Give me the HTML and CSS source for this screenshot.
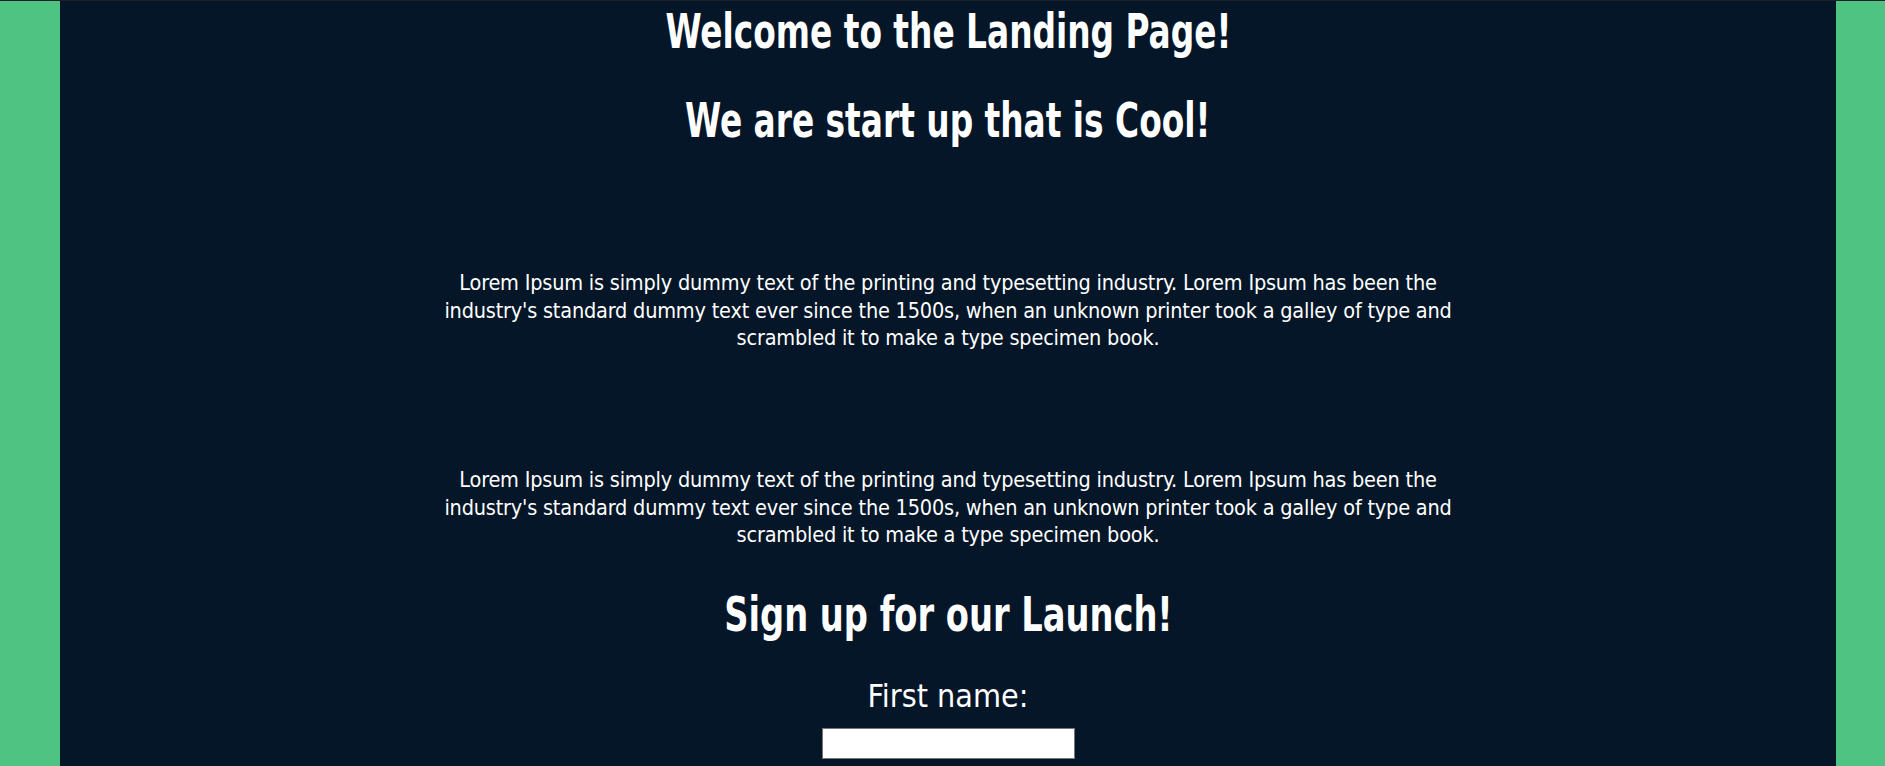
FILE: index.html
```html
<!DOCTYPE html>
<html lang="en">
<head>
<meta charset="utf-8">
<title>Landing Page</title>
<link rel="stylesheet" href="styles.css">
</head>
<body>
<main class="page">
  <h1 class="title">Welcome to the Landing Page!</h1>
  <h2 class="subtitle">We are start up that is Cool!</h2>
  <p class="blurb blurb-first">Lorem Ipsum is simply dummy text of the printing and typesetting industry. Lorem Ipsum has been the industry's standard dummy text ever since the 1500s, when an unknown printer took a galley of type and scrambled it to make a type specimen book.</p>
  <p class="blurb blurb-second">Lorem Ipsum is simply dummy text of the printing and typesetting industry. Lorem Ipsum has been the industry's standard dummy text ever since the 1500s, when an unknown printer took a galley of type and scrambled it to make a type specimen book.</p>
  <h2 class="signup-title">Sign up for our Launch!</h2>
  <form class="signup">
    <label class="signup-label" for="fname">First name:</label>
    <input class="signup-input" type="text" id="fname" name="fname">
  </form>
</main>
</body>
</html>
```
FILE: styles.css
```css
html, body {
  margin: 0;
  padding: 0;
}
body {
  background: #4fc482;
  border-top: 1px solid #1a1f28;
  font-family: "Liberation Sans Narrow", "DejaVu Sans Condensed", "Liberation Sans", sans-serif;
  color: #ffffff;
  overflow: hidden;
}
.page {
  margin: 0 49px 0 60px;
  min-height: 800px;
  background: #041628;
  display: flex;
  flex-direction: column;
  align-items: center;
  text-align: center;
}
.title,
.subtitle,
.signup-title {
  margin: 0;
  font-weight: 700;
  font-size: 48px;
  line-height: 56px;
  white-space: nowrap;
  transform: scaleX(0.76);
}
.title {
  margin-top: 2px;
}
.subtitle {
  margin-top: 33px;
}
.blurb {
  margin: 0;
  width: 1030px;
  font-size: 21.5px;
  letter-spacing: -0.2px;
  line-height: 27.6px;
}
.blurb-first {
  margin-top: 121px;
}
.blurb-second {
  margin-top: 114.5px;
}
.signup-title {
  margin-top: 36.7px;
  transform: scaleX(0.78);
}
.signup {
  display: flex;
  flex-direction: column;
  align-items: center;
  margin-top: 35px;
}
.signup-label {
  font-size: 32px;
  line-height: 39px;
}
.signup-input {
  margin-top: 12.6px;
  width: 253px;
  height: 31px;
  box-sizing: border-box;
  border: 1px solid #767676;
  background: #ffffff;
  padding: 0 4px;
}
```
